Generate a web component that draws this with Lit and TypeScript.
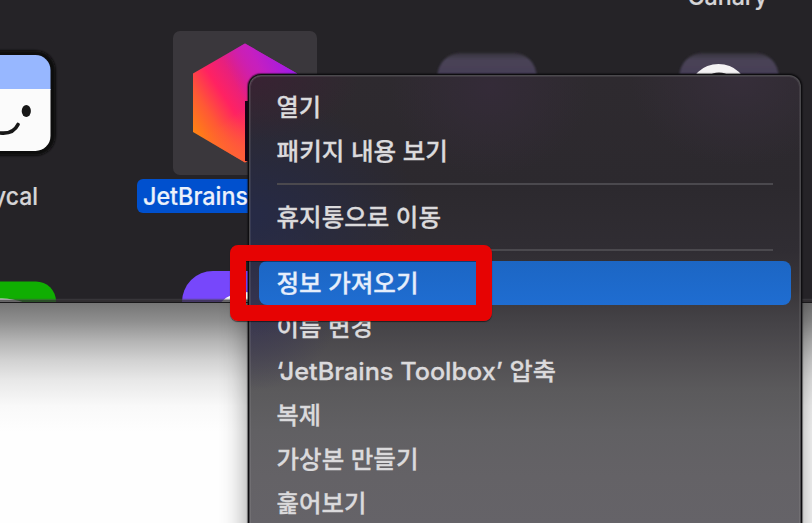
import { LitElement, html, svg, css } from "lit";
import { customElement, property } from "lit/decorators.js";

@customElement("desktop-scene")
class DesktopScene extends LitElement {
  static styles = css`
    :host { display: block; position: absolute; inset: 0; }
    svg { display: block; width: 812px; height: 523px; }
    text { font-family: Inter, "Liberation Sans", sans-serif; font-weight: 500; font-size: 24.5px; fill: #d6d5d7; stroke: #d6d5d7; stroke-width: .2px; }
    .selected { fill: #ecf1fb; stroke: #ecf1fb; }
  `;
  private face() {
    return svg`
      <rect x="-50" y="50.500" width="105.500" height="105" rx="20" fill="#0b0a0c" filter="url(#soft)"/>
      <clipPath id="face"><rect x="-45" y="55" width="95.500" height="96" rx="15"/></clipPath>
      <g clip-path="url(#face)">
        <rect x="-45" y="55" width="97" height="35" fill="#97b7ff"/>
        <rect x="-45" y="89" width="97" height="63" fill="#fbfbfb"/>
      </g>
      <ellipse cx="26.300" cy="111" rx="4.600" ry="6" fill="#171717"/>
      <path d="M-12 124.500C-8 135 12 137 18 124.500" fill="none" stroke="#171717" stroke-width="3.600" stroke-linecap="round"/>`;
  }
  render() {
    return html`<svg viewBox="0 0 812 523">
      <defs>
        <filter id="soft" x="-20%" y="-20%" width="140%" height="140%"><feGaussianBlur stdDeviation="1.2"/></filter>
        <filter id="wide" filterUnits="userSpaceOnUse" x="150" y="200" width="662" height="323"><feGaussianBlur stdDeviation="14"/></filter>
        <linearGradient id="shade" x1="0" y1="302" x2="0" y2="432" gradientUnits="userSpaceOnUse">
          <stop offset="0" stop-color="#747474"/><stop offset=".15" stop-color="#8f8f8f"/>
          <stop offset=".3" stop-color="#b4b4b4"/><stop offset=".45" stop-color="#d2d2d2"/>
          <stop offset=".6" stop-color="#e8e8e8"/><stop offset=".8" stop-color="#f9f9f9"/><stop offset="1" stop-color="#fefefe"/>
        </linearGradient>
        <linearGradient id="warm" x1="186" y1="128" x2="268" y2="74" gradientUnits="userSpaceOnUse">
          <stop offset="0" stop-color="#ff8a0c"/><stop offset=".28" stop-color="#ff5835"/>
          <stop offset=".5" stop-color="#ff2262"/><stop offset=".75" stop-color="#e01f86"/>
          <stop offset="1" stop-color="#c61fc1"/>
        </linearGradient>
        <linearGradient id="violet" x1="232" y1="78" x2="288" y2="50" gradientUnits="userSpaceOnUse">
          <stop offset="0" stop-color="#c51fc0" stop-opacity="0"/><stop offset=".45" stop-color="#c51fc0" stop-opacity=".7"/><stop offset="1" stop-color="#961af0"/>
        </linearGradient>
        <linearGradient id="ember" x1="212" y1="128" x2="232" y2="160" gradientUnits="userSpaceOnUse">
          <stop offset="0" stop-color="#ff6a35" stop-opacity="0"/><stop offset="1" stop-color="#ff6236" stop-opacity=".75"/>
        </linearGradient>
        <linearGradient id="lav" x1="0" y1="0" x2="0" y2="1">
          <stop offset="0" stop-color="#37333f"/><stop offset=".08" stop-color="#4b4458"/><stop offset=".3" stop-color="#413a55"/>
        </linearGradient>
        <clipPath id="below"><rect y="303" width="812" height="220"/></clipPath>
      </defs>
      <rect width="812" height="303" fill="#252327"/>
      ${this.face()}
      <rect x="173" y="31" width="144" height="144" rx="7" fill="#3a373c"/>
      <path d="M245 43.500L297 73.500V132L245 162.500L193 132V73.500Z" fill="url(#warm)"/>
      <path d="M245 43.500L297 73.500V132L245 162.500L193 132V73.500Z" fill="url(#violet)"/>
      <path d="M245 43.500L297 73.500V132L245 162.500L193 132V73.500Z" fill="url(#ember)"/>
      <rect x="245" y="101" width="40" height="60" fill="#170316"/>
      <rect x="137" y="179" width="220" height="34" rx="6" fill="#0050ce"/>
      <text class="selected" x="143" y="205" textLength="105" lengthAdjust="spacingAndGlyphs">JetBrains</text>
      <text x="-7" y="205" textLength="45" lengthAdjust="spacingAndGlyphs">ycal</text>
      <text x="687.500" y="4.500" textLength="80" lengthAdjust="spacingAndGlyphs">Canary</text>
      <rect x="437.500" y="53" width="99" height="98" rx="23" fill="url(#lav)" filter="url(#soft)"/>
      <rect x="679.500" y="53" width="99" height="98" rx="23" fill="url(#lav)" filter="url(#soft)"/>
      <ellipse cx="718.500" cy="91" rx="29" ry="27" fill="#f4f2f4"/>
      <ellipse cx="719" cy="87.500" rx="16" ry="15" fill="#2b272c"/>
      <rect x="-40" y="281.500" width="96" height="60" rx="20" fill="#10ae02"/>
      <ellipse cx="2" cy="310" rx="28" ry="11.500" fill="#fff"/>
      <rect x="182" y="271" width="110" height="80" rx="31" fill="#7747fb"/>
      <circle cx="245" cy="325" r="33" fill="#fff"/>
      <path d="M0 299.500H812" stroke="#4a484b" stroke-opacity=".5" stroke-width="1.500"/>
      <path d="M0 301H812" stroke="#343235" stroke-width="1.500"/>
      <path d="M0 302.500H812" stroke="#19181a" stroke-width="1"/>
      <rect y="303" width="812" height="220" fill="url(#shade)"/>
      <g clip-path="url(#below)"><rect x="248" y="230" width="553" height="500" fill="#000" opacity=".42" filter="url(#wide)"/></g>
    </svg>`;
  }
}

@customElement("context-menu")
class ContextMenu extends LitElement {
  @property({ attribute: false }) groups: { label: string; width: number; active?: boolean }[][] = [];
  static styles = css`
    :host {
      display: block; box-sizing: border-box; position: absolute; left: 249px; top: 75px; width: 552px; height: 480px;
      padding: 9px 9px 0; border: 1px solid #ffffff40; border-radius: 12px;
      box-shadow: inset 0 0 0 1px #ffffff14, 0 0 0 1px #0e0d10, 0 0 1px 2px #0e0d1080;
      background:
        radial-gradient(ellipse 110px 65px at 0 0, #3b2034d0, #3b203400) no-repeat,
        radial-gradient(ellipse 170px 120px at 0 140px, #262a45 5%, #262a4500) no-repeat,
        radial-gradient(ellipse 90px 90px at 0 225px, #3a3753 5%, #3a375300) no-repeat,
        radial-gradient(ellipse 100px 90px at 240px 10px, #342b38, #342b3800) no-repeat,
        radial-gradient(ellipse 110px 90px at 490px 0, #362e3a, #362e3a00) no-repeat,
        linear-gradient(#2e2a2f 0, #2c292e 110px, #302d33 175px, #39363a 215px, #444246 245px, #525053 285px, #5b5a5c 315px, #616063 355px, #646266 400px, #656368 450px);
      background-clip: padding-box;
      background-color: #2b282d;
    }
    .row { height: 44px; display: flex; align-items: center; padding-left: 18px; border-radius: 8px; }
    .active { background: linear-gradient(#1c66c4, #1f6dd1); }
    svg { display: block; height: 44px; overflow: visible; }
    text { font: 500 24px Inter, "Noto Sans CJK KR", sans-serif; fill: #dbdadc; stroke: #dbdadc; stroke-width: .3px; }
    .active text { fill: #e6eefb; stroke: #e6eefb; }
    .line { height: 2px; margin: 10px 18px; background: #4b494e; }
  `;
  render() {
    return this.groups.map((g, i) => html`
      ${i ? html`<div class="line"></div>` : ""}
      ${g.map(r => html`<div class="row ${r.active ? "active" : ""}">
        <svg width=${r.width} height="44"><text x="-0.5" y="31" textLength=${r.width} lengthAdjust="spacingAndGlyphs">${r.label}</text></svg>
      </div>`)}`);
  }
}

@customElement("app-root")
class AppRoot extends LitElement {
  static styles = css`
    :host { display: block; position: relative; width: 812px; height: 523px; overflow: hidden; background: #fff; }
    .marker {
      position: absolute; left: 230px; top: 245px; width: 262px; height: 76px; box-sizing: border-box;
      border: 16px solid #e60303; border-radius: 8px; box-shadow: 0 1px 1px #0008, inset 0 1px 0 #0006;
    }
  `;
  private groups = [
    [{ label: "열기", width: 44.5 }, { label: "패키지 내용 보기", width: 171.5 }],
    [{ label: "휴지통으로 이동", width: 164.5 }],
    [
      { label: "정보 가져오기", width: 142, active: true },
      { label: "이름 변경", width: 96.5 },
      { label: "‘JetBrains Toolbox’ 압축", width: 279.5 },
      { label: "복제", width: 44.5 },
      { label: "가상본 만들기", width: 142 },
      { label: "훑어보기", width: 90 },
    ],
  ];
  render() {
    return html`<desktop-scene></desktop-scene>
      <context-menu .groups=${this.groups}></context-menu>
      <div class="marker"></div>`;
  }
}
